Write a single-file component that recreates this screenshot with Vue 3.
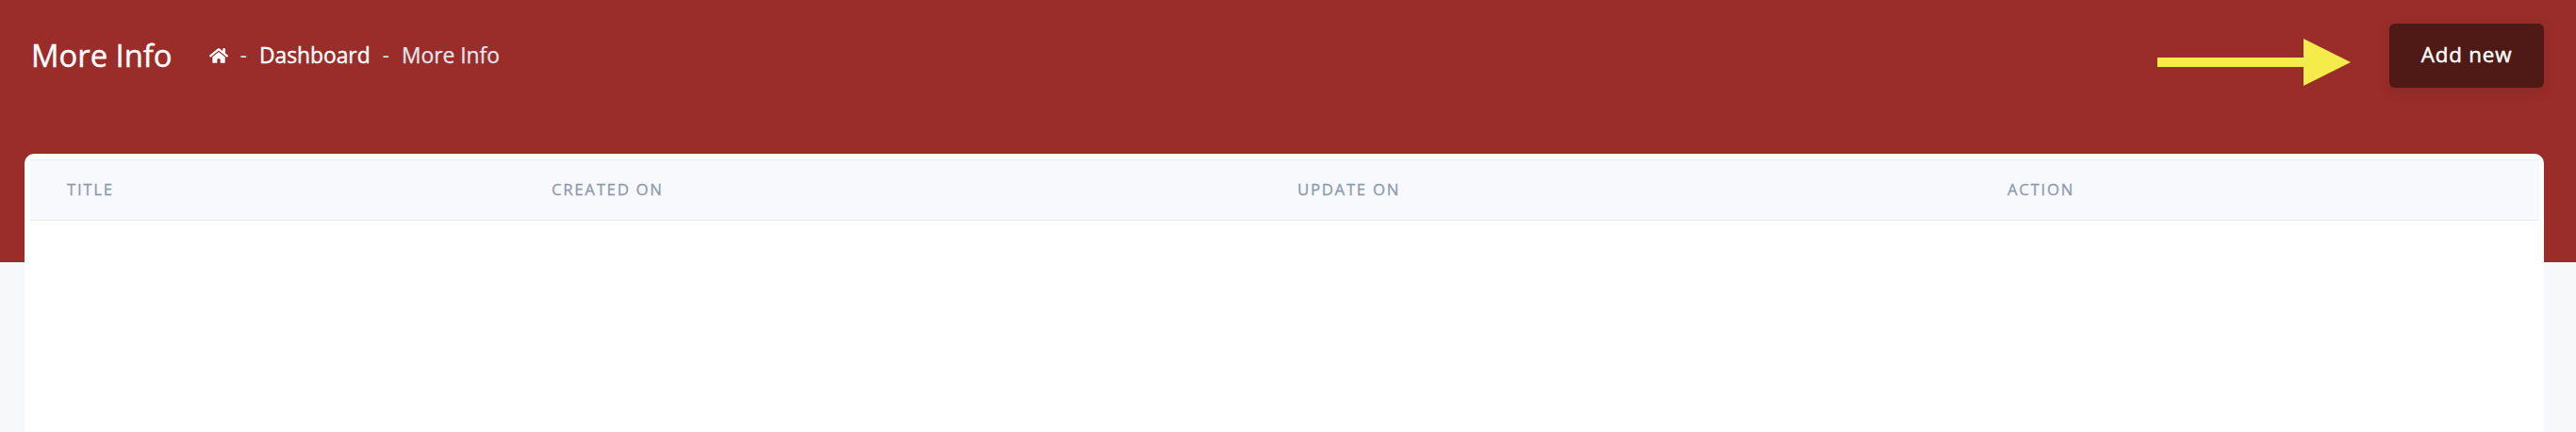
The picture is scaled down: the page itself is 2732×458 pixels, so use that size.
<template>
  <div class="page">
    <header class="toolbar">
      <div class="heading">
        <h1 class="title">More Info</h1>
        <nav class="crumbs">
          <svg class="home" viewBox="0 0 576 512" aria-hidden="true">
            <path d="M280.37 148.26L96 300.11V464a16 16 0 0 0 16 16l112.06-.29a16 16 0 0 0 15.92-16V368a16 16 0 0 1 16-16h64a16 16 0 0 1 16 16v95.64a16 16 0 0 0 16 16.05L464 480a16 16 0 0 0 16-16V300L295.67 148.26a12.19 12.19 0 0 0-15.3 0zM571.6 251.47L488 182.56V44.05a12 12 0 0 0-12-12h-56a12 12 0 0 0-12 12v72.61L318.47 43a48 48 0 0 0-61 0L4.34 251.47a12 12 0 0 0-1.6 16.9l25.5 31A12 12 0 0 0 45.15 301l235.22-193.74a12.19 12.19 0 0 1 15.3 0L530.9 301a12 12 0 0 0 16.9-1.6l25.5-31a12 12 0 0 0-1.7-16.93z" />
          </svg>
          <span class="sep">-</span>
          <a class="crumb">Dashboard</a>
          <span class="sep">-</span>
          <span class="crumb current">More Info</span>
        </nav>
      </div>
      <button class="add-btn" type="button">Add new</button>
      <!-- yellow annotation arrow pointing at the button -->
      <svg class="arrow" viewBox="0 0 205 50" aria-hidden="true">
        <path d="M0 20H155V0L205 25L155 50V30H0Z" />
      </svg>
    </header>

    <main class="content">
      <section class="card">
        <table class="list">
          <thead>
            <tr>
              <th v-for="col in columns" :key="col.label" :style="{ width: col.width + 'px' }">{{ col.label }}</th>
            </tr>
          </thead>
        </table>
      </section>
    </main>
  </div>
</template>

<script setup>
const columns = [
  { label: 'Title', width: 514 },
  { label: 'Created on', width: 791 },
  { label: 'Update on', width: 753 },
  { label: 'Action', width: 603 },
]
</script>

<style>
html,
body {
  margin: 0;
  background: #f7f8fa;
}
</style>

<style scoped>
.page {
  height: 458px;
  overflow: hidden;
  font-family: "Open Sans", "Noto Sans", sans-serif;
}

.toolbar {
  position: relative;
  box-sizing: border-box;
  height: 278px;
  padding: 25px 34px 0 33px;
  background: #9a2d2a;
  display: flex;
  align-items: flex-start;
  justify-content: space-between;
}

.heading {
  display: flex;
  align-items: center;
  height: 68px;
}

.title {
  margin: 0 39px 0 0;
  font-size: 32.8px;
  font-weight: 400;
  line-height: 44px;
  color: #fff;
  -webkit-text-stroke: 0.4px #fff;
}

.crumbs {
  display: flex;
  align-items: center;
  gap: 13px;
  font-size: 22.8px;
  font-weight: 400;
  line-height: 32px;
  color: #fff;
}

.home {
  width: 20px;
  height: 18px;
  fill: #fff;
}

.sep {
  color: #d9dbe3;
}

.crumb {
  -webkit-text-stroke: 0.4px #fff;
}

.crumb.current {
  color: #e4e6ef;
  -webkit-text-stroke: 0.25px #e4e6ef;
}

.add-btn {
  width: 164px;
  height: 68px;
  padding: 0 0 3px;
  border: 0;
  border-radius: 6px;
  background: #4f1a16;
  box-shadow: 0 4px 14px rgba(79, 26, 22, 0.18);
  color: #fff;
  font: 400 22.4px "Open Sans", "Noto Sans", sans-serif;
  letter-spacing: 0.8px;
  -webkit-text-stroke: 0.45px #fff;
}

.arrow {
  position: absolute;
  left: 2288px;
  top: 41px;
  width: 205px;
  height: 50px;
  fill: #f5ec4b;
}

.content {
  padding: 0 34px 0 26px;
  margin-top: -115px;
}

.card {
  position: relative;
  box-sizing: border-box;
  height: 400px;
  padding: 6px 5px 0 6px;
  border-radius: 10px;
  background: #fff;
}

.list {
  width: 100%;
  border-collapse: collapse;
  table-layout: fixed;
}

.list th {
  box-sizing: border-box;
  height: 64px;
  padding: 0 0 2px 39px;
  background: #f8f9fd;
  border-top: 1px solid #ebedf3;
  border-bottom: 1px solid #ebedf3;
  text-align: left;
  font-size: 16.8px;
  font-weight: 400;
  letter-spacing: 1.7px;
  text-transform: uppercase;
  color: #8c9aae;
  -webkit-text-stroke: 0.3px #8c9aae;
}
</style>
